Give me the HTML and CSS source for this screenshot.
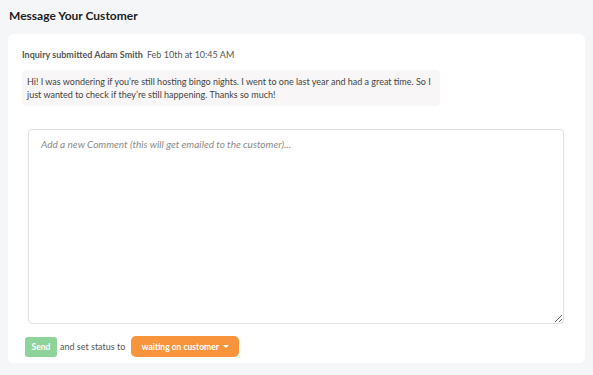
FILE: index.html
```html
<!DOCTYPE html>
<html>
<head>
<meta charset="utf-8">
<link rel="stylesheet" href="styles.css">
</head>
<body>
<h1 class="title">Message Your Customer</h1>
<div class="card">
  <div class="meta"><span class="who">Inquiry submitted Adam Smith</span><span class="when">Feb 10th at 10:45 AM</span></div>
  <div class="bubble">Hi! I was wondering if you’re still hosting bingo nights. I went to one last year and had a great time. So I just wanted to check if they’re still happening. Thanks so much!</div>
  <textarea class="comment" placeholder="Add a new Comment (this will get emailed to the customer)..."></textarea>
  <div class="actions">
    <button class="send">Send</button>
    <span class="label">and set status to</span>
    <button class="status">waiting on customer <span class="caret"></span></button>
  </div>
</div>
</body>
</html>
```
FILE: styles.css
```css
html, body { margin: 0; padding: 0; }
body {
  background: #f5f6f8;
  font-family: Lato, "Open Sans", sans-serif;
  color: #333;
  padding: 7px 8px 0 8px;
  width: 577px;
}
.title {
  font-size: 12px;
  font-weight: 700;
  color: #1e1e1e;
  margin: 0 0 10px 1px;
  line-height: 17px;
}
.card {
  background: #fff;
  border-radius: 6px;
  padding: 14px 20px 6px 14px;
  height: 309px;
  display: flex;
  flex-direction: column;
}
.meta {
  font-size: 9px;
  color: #555;
  line-height: 13px;
  display: flex;
  gap: 4px;
}
.who { font-weight: 700; }
.bubble {
  margin-top: 9px;
  background: #f8f6f6;
  border-radius: 4px;
  width: 408px;
  padding: 5px 5px;
  font-size: 9px;
  line-height: 13px;
  color: #444;
}
.comment {
  margin: 23px 0 0 6px;
  height: 196px;
  width: 536px;
  box-sizing: border-box;
  border: 1px solid #e2e2e2;
  border-radius: 4px;
  padding: 8px 12px;
  font-family: Lato, sans-serif;
  font-size: 10px;
  resize: vertical;
}
.comment::placeholder {
  font-style: italic;
  color: #8a8a8a;
}
.actions {
  margin-top: 12px;
  margin-left: 3px;
  display: flex;
  align-items: center;
  gap: 3px;
}
.send {
  background: #8ed39a;
  color: #fff;
  border: none;
  border-radius: 3px;
  font-family: Lato, sans-serif;
  font-size: 8.5px;
  font-weight: 700;
  width: 32px;
  height: 20px;
  padding: 0;
}
.label {
  font-size: 9px;
  color: #555;
  margin-right: 3px;
}
.status {
  background: #f7943c;
  color: #fff;
  border: none;
  border-radius: 5px;
  font-family: Lato, sans-serif;
  font-size: 8.5px;
  font-weight: 700;
  width: 108px;
  height: 21px;
  padding: 0;
  display: flex;
  align-items: center;
  justify-content: center;
  gap: 4px;
}
.caret {
  width: 0; height: 0;
  border-left: 3px solid transparent;
  border-right: 3px solid transparent;
  border-top: 3px solid #fff;
}
```
